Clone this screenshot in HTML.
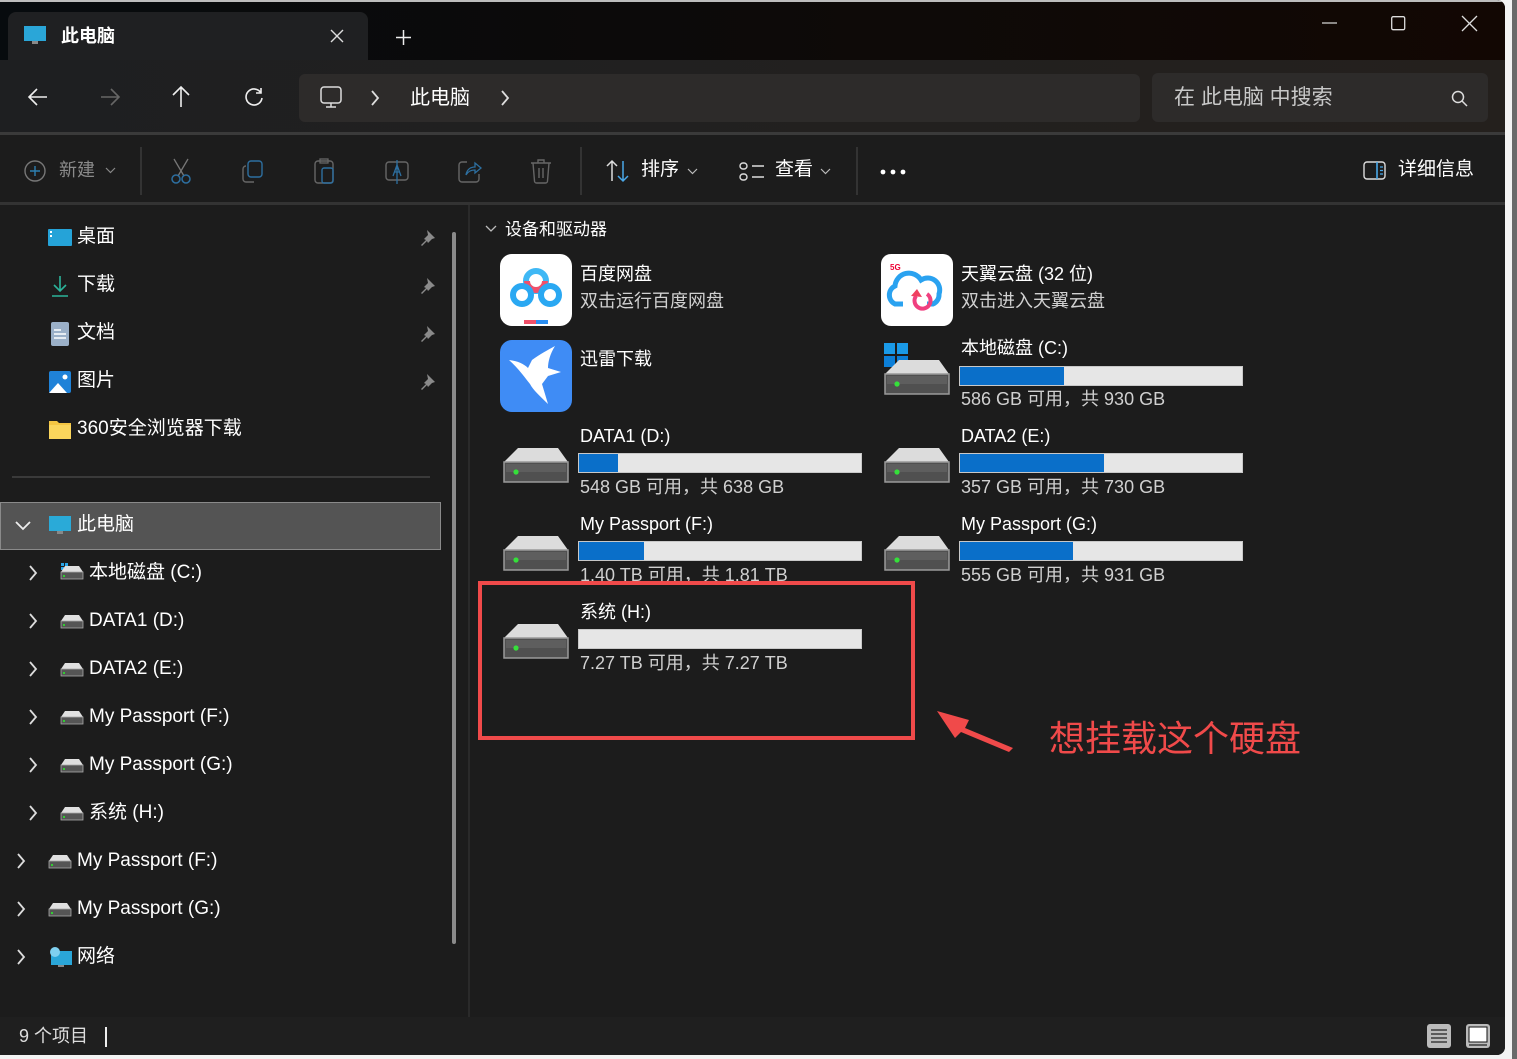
<!DOCTYPE html>
<html><head><meta charset="utf-8"><style>
*{margin:0;padding:0;box-sizing:border-box}
body{width:1517px;height:1059px;background:#f3f3f3;overflow:hidden;position:relative;font-family:"Liberation Sans","Noto Sans CJK SC",sans-serif;color:#fff;line-height:1.3}
.win{position:absolute;left:0;top:0;width:1505px;height:1055px;background:#1c1c1c;border-radius:0 8px 8px 0;overflow:hidden}
.a{position:absolute;white-space:nowrap}
.t19{font-size:19px}
.sub{color:#d0d0d0}
.bar{position:absolute;height:20px;background:#e6e6e6;border:1px solid #c8c8c8}
.bar i{display:block;height:100%;background:#0a6fc9}
svg{position:absolute;overflow:visible}
</style></head><body>
<div style="position:absolute;left:1512px;top:0;width:5px;height:1059px;background:#6a6a6a"></div>
<div class="win">
<svg width="0" height="0" style="position:absolute">
<defs>
<g id="big"><path d="M14 0H54L64 14H0Z" fill="#dcdcdc"/><rect x="0" y="14" width="64" height="20" fill="#505050" stroke="#9a9a9a" stroke-width="1.5"/><rect x="2" y="16" width="60" height="8" fill="#5e5e5e"/><circle cx="12" cy="24" r="2.6" fill="#35e03a"/></g>
<g id="sm"><path d="M4 0H18L22 6H0Z" fill="#e0e0e0"/><rect x="0" y="6" width="22" height="7" fill="#555" stroke="#aaa" stroke-width="0.8"/><rect x="2" y="9" width="2" height="2" fill="#3c3"/></g>
<g id="chev"><path d="M0 0L6 7L0 14" fill="none" stroke="#ddd" stroke-width="1.8"/></g>
<g id="pin"><path d="M6 0L14 8L11 9L7 13L6 11L1 16L0 15L5 10L3 9L7 5Z" fill="#8a8a8a"/></g>
</defs></svg>
<!-- title bar -->
<div class="a" style="left:0;top:0;width:1505px;height:60px;background:linear-gradient(90deg,#070b0e,#0e0a08 60%,#120703)"></div>
<div class="a" style="left:0;top:0;width:1505px;height:2px;background:#bdbdbd"></div>
<div class="a" style="left:8px;top:12px;width:360px;height:48px;background:#1f2022;border-radius:8px 8px 0 0"></div>
<svg style="left:24px;top:26px" width="22" height="20"><rect x="0" y="0" width="22" height="15" fill="#2aa6d8"/><rect x="8" y="15" width="6" height="3" fill="#888"/></svg>
<div class="a" style="left:61px;top:25px;font-size:18px;font-weight:bold">此电脑</div>
<svg style="left:331px;top:30px" width="12" height="12"><path d="M0 0L12 12M12 0L0 12" stroke="#ddd" stroke-width="1.4"/></svg>
<svg style="left:396px;top:30px" width="15" height="15"><path d="M7.5 0V15M0 7.5H15" stroke="#eee" stroke-width="1.5"/></svg>
<svg style="left:1322px;top:22px" width="16" height="2"><path d="M0 1H15" stroke="#ddd" stroke-width="1.2"/></svg>
<svg style="left:1391px;top:16px" width="15" height="15"><rect x="0.7" y="0.7" width="13" height="13" rx="1.5" fill="none" stroke="#ddd" stroke-width="1.3"/></svg>
<svg style="left:1462px;top:16px" width="15" height="15"><path d="M0 0L15 15M15 0L0 15" stroke="#ddd" stroke-width="1.3"/></svg>
<!-- nav -->
<div class="a" style="left:0;top:60px;width:1505px;height:72px;background:linear-gradient(90deg,#1e1f21,#22201f 60%,#24201d)"></div>
<div class="a" style="left:0;top:132px;width:1505px;height:3px;background:#3a3a3a"></div>
<svg style="left:28px;top:88px" width="20" height="18"><path d="M19 9H1M9 1L1 9L9 17" fill="none" stroke="#eee" stroke-width="1.6"/></svg>
<svg style="left:100px;top:88px" width="20" height="18"><path d="M1 9H19M11 1L19 9L11 17" fill="none" stroke="#666" stroke-width="1.6"/></svg>
<svg style="left:172px;top:86px" width="18" height="22"><path d="M9 21V1M1 9L9 1L17 9" fill="none" stroke="#eee" stroke-width="1.6"/></svg>
<svg style="left:244px;top:87px" width="20" height="20"><path d="M17 6A8 8 0 1 0 18 11M17 1V6H12" fill="none" stroke="#eee" stroke-width="1.6"/></svg>
<div class="a" style="left:299px;top:74px;width:841px;height:48px;background:#2d2b2a;border-radius:6px"></div>
<svg style="left:320px;top:86px" width="22" height="22"><rect x="1" y="1" width="20" height="16" rx="3" fill="none" stroke="#ddd" stroke-width="1.5"/><path d="M11 17V21M6 21H16" stroke="#ddd" stroke-width="1.5"/></svg>
<svg style="left:372px;top:91px" width="8" height="14"><use href="#chev"/></svg>
<div class="a" style="left:410px;top:85px;font-size:20px">此电脑</div>
<svg style="left:502px;top:91px" width="8" height="14"><use href="#chev"/></svg>
<div class="a" style="left:1152px;top:73px;width:336px;height:49px;background:#2d2b2a;border-radius:6px"></div>
<div class="a" style="left:1174px;top:84px;font-size:21px;color:#c8c8c8">在 此电脑 中搜索</div>
<svg style="left:1451px;top:90px" width="18" height="18"><circle cx="7" cy="7" r="5.5" fill="none" stroke="#ddd" stroke-width="1.5"/><path d="M11 11L16 16" stroke="#ddd" stroke-width="1.5"/></svg>
<!-- toolbar -->
<div class="a" style="left:0;top:202px;width:1505px;height:3px;background:#333"></div>
<svg style="left:24px;top:160px" width="22" height="22"><circle cx="11" cy="11" r="10" fill="none" stroke="#777" stroke-width="1.4"/><path d="M11 6V16M6 11H16" stroke="#2d7fb0" stroke-width="1.4"/></svg>
<div class="a" style="left:59px;top:159px;font-size:18px;color:#8a8a8a">新建</div>
<svg style="left:106px;top:168px" width="9" height="6"><path d="M0 0L4.5 4.5L9 0" fill="none" stroke="#888" stroke-width="1.2"/></svg>
<div class="a" style="left:140px;top:147px;width:2px;height:48px;background:#333"></div>
<svg style="left:170px;top:159px" width="22" height="26"><path d="M4 0L14 17M18 0L8 17" stroke="#777" stroke-width="1.3"/><circle cx="6" cy="20" r="4" fill="none" stroke="#2d6fa0" stroke-width="1.5"/><circle cx="16" cy="20" r="4" fill="none" stroke="#2d6fa0" stroke-width="1.5"/></svg>
<svg style="left:242px;top:160px" width="22" height="24"><rect x="6" y="1" width="14" height="16" rx="3" fill="none" stroke="#2d6fa0" stroke-width="1.4"/><path d="M4 6A3 3 0 0 0 1 9V19A3 3 0 0 0 4 22H12" fill="none" stroke="#666" stroke-width="1.4"/></svg>
<svg style="left:314px;top:158px" width="22" height="26"><rect x="1" y="3" width="18" height="22" rx="3" fill="none" stroke="#666" stroke-width="1.4"/><rect x="6" y="1" width="8" height="4" fill="none" stroke="#666" stroke-width="1.3"/><rect x="8" y="10" width="11" height="15" rx="2" fill="none" stroke="#2d6fa0" stroke-width="1.4"/></svg>
<svg style="left:385px;top:159px" width="26" height="26"><rect x="1" y="3" width="22" height="18" rx="3" fill="none" stroke="#666" stroke-width="1.4"/><path d="M8 17L12 6L16 17M9.5 13H14.5M12 1V25" fill="none" stroke="#2d6fa0" stroke-width="1.3"/></svg>
<svg style="left:458px;top:159px" width="24" height="24"><path d="M9 3H4A3 3 0 0 0 1 6V20A3 3 0 0 0 4 23H18A3 3 0 0 0 21 20V15" fill="none" stroke="#666" stroke-width="1.4"/><path d="M8 16C9 10 13 8 17 8V4L23 9L17 14V11C13 11 10 12 8 16Z" fill="none" stroke="#2d6fa0" stroke-width="1.3"/></svg>
<svg style="left:530px;top:159px" width="22" height="25"><path d="M1 4H21M8 4V1H14V4M3 4L4.5 22A2 2 0 0 0 6.5 24H15.5A2 2 0 0 0 17.5 22L19 4M9 9V19M13 9V19" fill="none" stroke="#666" stroke-width="1.4"/></svg>
<div class="a" style="left:580px;top:147px;width:2px;height:48px;background:#333"></div>
<svg style="left:606px;top:160px" width="24" height="22"><path d="M6 21V1M1 6L6 1L11 6" fill="none" stroke="#ddd" stroke-width="1.5"/><path d="M17 1V21M12 16L17 21L22 16" fill="none" stroke="#4aa8e8" stroke-width="1.5"/></svg>
<div class="a" style="left:641px;top:158px;font-size:19px">排序</div>
<svg style="left:688px;top:169px" width="9" height="6"><path d="M0 0L4.5 4.5L9 0" fill="none" stroke="#bbb" stroke-width="1.2"/></svg>
<svg style="left:739px;top:162px" width="26" height="20"><rect x="1" y="1" width="7" height="6" rx="3" fill="none" stroke="#ddd" stroke-width="1.4"/><rect x="1" y="12" width="7" height="6" rx="3" fill="none" stroke="#ddd" stroke-width="1.4"/><path d="M13 4H25M13 15H25" stroke="#ddd" stroke-width="1.4"/></svg>
<div class="a" style="left:775px;top:158px;font-size:19px">查看</div>
<svg style="left:821px;top:169px" width="9" height="6"><path d="M0 0L4.5 4.5L9 0" fill="none" stroke="#bbb" stroke-width="1.2"/></svg>
<div class="a" style="left:856px;top:147px;width:2px;height:48px;background:#333"></div>
<svg style="left:880px;top:169px" width="28" height="6"><circle cx="3" cy="3" r="2.4" fill="#fff"/><circle cx="13" cy="3" r="2.4" fill="#fff"/><circle cx="23" cy="3" r="2.4" fill="#fff"/></svg>
<svg style="left:1363px;top:161px" width="24" height="20"><rect x="1" y="1" width="21" height="17" rx="3" fill="none" stroke="#ddd" stroke-width="1.4"/><path d="M14 1V18" stroke="#4aa8e8" stroke-width="1.6"/><path d="M17 6H20M17 9.5H20M17 13H20" stroke="#4aa8e8" stroke-width="1.2"/></svg>
<div class="a" style="left:1398px;top:158px;font-size:19px">详细信息</div>
<!-- sidebar -->
<div class="a" style="left:468px;top:205px;width:2px;height:812px;background:#2a2a2a"></div>
<div class="a" style="left:452px;top:232px;width:4px;height:712px;background:#8a8a8a;border-radius:2px"></div>
<svg style="left:48px;top:229px" width="24" height="18"><rect x="0" y="0" width="24" height="17" rx="1" fill="#25a3d8"/><rect x="2" y="2" width="2" height="2" fill="#fff"/><rect x="2" y="6" width="2" height="2" fill="#fff"/></svg>
<div class="a t19" style="left:77px;top:225px">桌面</div>
<svg style="left:51px;top:275px" width="18" height="22"><path d="M9 1V16M3 10L9 16L15 10M1 21H17" fill="none" stroke="#2bb39a" stroke-width="1.6"/></svg>
<div class="a t19" style="left:77px;top:273px">下载</div>
<svg style="left:51px;top:322px" width="18" height="24"><rect x="0" y="0" width="18" height="24" rx="2" fill="#9bb0c8"/><path d="M3 8H10M3 12H15M3 16H15" stroke="#fff" stroke-width="1.4"/></svg>
<div class="a t19" style="left:77px;top:321px">文档</div>
<svg style="left:49px;top:371px" width="22" height="22"><rect x="0" y="0" width="22" height="22" rx="2" fill="#1f82d8"/><path d="M0 22L9 12L18 22Z" fill="#fff"/><circle cx="16" cy="6" r="2.5" fill="#fff"/></svg>
<div class="a t19" style="left:77px;top:369px">图片</div>
<svg style="left:49px;top:421px" width="22" height="18"><path d="M0 0H8L10 2H22V18H0Z" fill="#f4c542"/><rect x="0" y="4" width="22" height="14" fill="#fad55c"/></svg>
<div class="a t19" style="left:77px;top:417px">360安全浏览器下载</div>
<svg style="left:421px;top:230px" width="16" height="16"><use href="#pin"/></svg>
<svg style="left:421px;top:278px" width="16" height="16"><use href="#pin"/></svg>
<svg style="left:421px;top:326px" width="16" height="16"><use href="#pin"/></svg>
<svg style="left:421px;top:374px" width="16" height="16"><use href="#pin"/></svg>
<div class="a" style="left:12px;top:476px;width:418px;height:2px;background:#3a3a3a"></div>
<div class="a" style="left:0;top:502px;width:441px;height:48px;background:#545454;border:1px solid #8a8a8a"></div>
<svg style="left:15px;top:521px" width="16" height="9"><path d="M1 1L8 8L15 1" fill="none" stroke="#eee" stroke-width="1.8"/></svg>
<svg style="left:49px;top:516px" width="22" height="20"><rect x="0" y="0" width="22" height="15" fill="#2aaad8"/><rect x="8" y="15" width="6" height="3" fill="#888"/></svg>
<div class="a t19" style="left:77px;top:513px">此电脑</div>

<svg style="left:30px;top:566px" width="8" height="14"><use href="#chev"/></svg>
<svg style="left:61px;top:563px" width="22" height="16"><rect x="0" y="0" width="3" height="3" fill="#2aa6e8"/><rect x="4" y="0" width="3" height="3" fill="#2aa6e8"/><rect x="0" y="4" width="3" height="3" fill="#2aa6e8"/><g transform="translate(0,3)"><use href="#sm"/></g></svg>
<div class="a t19" style="left:89px;top:561px">本地磁盘 (C:)</div>
<svg style="left:30px;top:614px" width="8" height="14"><use href="#chev"/></svg>
<svg style="left:61px;top:615px" width="22" height="14"><use href="#sm"/></svg>
<div class="a t19" style="left:89px;top:609px">DATA1 (D:)</div>
<svg style="left:30px;top:662px" width="8" height="14"><use href="#chev"/></svg>
<svg style="left:61px;top:663px" width="22" height="14"><use href="#sm"/></svg>
<div class="a t19" style="left:89px;top:657px">DATA2 (E:)</div>
<svg style="left:30px;top:710px" width="8" height="14"><use href="#chev"/></svg>
<svg style="left:61px;top:711px" width="22" height="14"><use href="#sm"/></svg>
<div class="a t19" style="left:89px;top:705px">My Passport (F:)</div>
<svg style="left:30px;top:758px" width="8" height="14"><use href="#chev"/></svg>
<svg style="left:61px;top:759px" width="22" height="14"><use href="#sm"/></svg>
<div class="a t19" style="left:89px;top:753px">My Passport (G:)</div>
<svg style="left:30px;top:806px" width="8" height="14"><use href="#chev"/></svg>
<svg style="left:61px;top:807px" width="22" height="14"><use href="#sm"/></svg>
<div class="a t19" style="left:89px;top:801px">系统 (H:)</div>
<svg style="left:18px;top:854px" width="8" height="14"><use href="#chev"/></svg>
<svg style="left:49px;top:855px" width="22" height="14"><use href="#sm"/></svg>
<div class="a t19" style="left:77px;top:849px">My Passport (F:)</div>
<svg style="left:18px;top:902px" width="8" height="14"><use href="#chev"/></svg>
<svg style="left:49px;top:903px" width="22" height="14"><use href="#sm"/></svg>
<div class="a t19" style="left:77px;top:897px">My Passport (G:)</div>
<svg style="left:18px;top:950px" width="8" height="14"><use href="#chev"/></svg>
<svg style="left:48px;top:946px" width="24" height="22"><rect x="3" y="5" width="21" height="14" fill="#2aa6d8"/><circle cx="7" cy="6" r="5" fill="#7fd0f0"/><rect x="10" y="19" width="6" height="2" fill="#888"/></svg>
<div class="a t19" style="left:77px;top:945px">网络</div>
<!-- status -->
<div class="a" style="left:0;top:1017px;width:1505px;height:40px;background:#1f1f1f"></div>
<div class="a" style="left:19px;top:1025px;font-size:18px;color:#ddd">9 个项目</div>
<div class="a" style="left:105px;top:1027px;width:2px;height:20px;background:#eee"></div>
<svg style="left:1427px;top:1024px" width="24" height="24"><rect x="0" y="0" width="24" height="24" rx="3" fill="#bbb"/><path d="M4 6H20M4 10H20M4 14H20M4 18H20" stroke="#222" stroke-width="1.2"/></svg>
<svg style="left:1466px;top:1024px" width="24" height="24"><rect x="0" y="0" width="24" height="24" rx="3" fill="#bbb"/><rect x="3" y="3" width="18" height="15" fill="#fff" stroke="#111"/><path d="M3 21H21" stroke="#222" stroke-width="1.2"/></svg>
<!-- content -->
<svg style="left:485px;top:225px" width="12" height="8"><path d="M1 1L6 6L11 1" fill="none" stroke="#bbb" stroke-width="1.3"/></svg>
<div class="a" style="left:505px;top:219px;font-size:17px">设备和驱动器</div>
<!-- baidu -->
<div class="a" style="left:500px;top:254px;width:72px;height:72px;background:#fff;border-radius:12px"></div>
<svg style="left:500px;top:254px" width="72" height="72"><circle cx="36" cy="27" r="10" fill="none" stroke="#3fb8f5" stroke-width="6"/><path d="M27 27A9 9 0 0 0 45 27" fill="none" stroke="#f0506a" stroke-width="6"/><circle cx="22" cy="41" r="9" fill="none" stroke="#2aa8f2" stroke-width="6"/><circle cx="50" cy="41" r="9" fill="none" stroke="#2aa8f2" stroke-width="6"/><rect x="24" y="66" width="12" height="4" fill="#f0506a"/><rect x="36" y="66" width="12" height="4" fill="#2a8ef2"/></svg>
<div class="a" style="left:580px;top:263px;font-size:18px">百度网盘</div>
<div class="a sub" style="left:580px;top:290px;font-size:18px">双击运行百度网盘</div>
<!-- xunlei -->
<div class="a" style="left:500px;top:340px;width:72px;height:72px;background:#3f8cf5;border-radius:12px"></div>
<svg style="left:500px;top:340px" width="72" height="72"><path d="M9 20C18 21 24 24 28 28L32 20C40 14 48 10 55 6C50 14 48 22 48 28L61 32L48 36L42 44L48 64C40 56 33 50 30 44C25 38 20 30 9 20Z" fill="#fff"/></svg>
<div class="a" style="left:580px;top:348px;font-size:18px">迅雷下载</div>
<!-- tianyi -->
<div class="a" style="left:881px;top:254px;width:72px;height:72px;background:#fff;border-radius:10px"></div>
<svg style="left:881px;top:254px" width="72" height="72"><text x="9" y="16" font-size="8" font-weight="bold" fill="#e03" font-family="Liberation Sans">5G</text><path d="M22 50H14A10 10 0 0 1 14 32A14 14 0 0 1 40 26A12 12 0 0 1 58 40A10 10 0 0 1 52 50H46" fill="none" stroke="#2aa2f0" stroke-width="5"/><path d="M35 42A8 8 0 1 0 46 40" fill="none" stroke="#f04080" stroke-width="4"/><path d="M30 42L36 35L41 43Z" fill="#f04060"/></svg>
<div class="a" style="left:961px;top:263px;font-size:18px">天翼云盘 (32 位)</div>
<div class="a sub" style="left:961px;top:290px;font-size:18px">双击进入天翼云盘</div>
<!-- C -->
<svg style="left:884px;top:343px" width="64" height="52"><rect x="0" y="0" width="11" height="11" fill="#1a9ae8"/><rect x="13" y="0" width="11" height="11" fill="#1a9ae8"/><rect x="0" y="13" width="11" height="11" fill="#0c7fd8"/><rect x="13" y="13" width="11" height="11" fill="#0c7fd8"/><g transform="translate(1,17)"><use href="#big"/></g></svg>
<div class="a" style="left:961px;top:337px;font-size:18px">本地磁盘 (C:)</div>
<div class="bar" style="left:959px;top:366px;width:284px"><i style="width:37%"></i></div>
<div class="a sub" style="left:961px;top:388px;font-size:18px">586 GB 可用，共 930 GB</div>
<!-- D -->
<svg style="left:504px;top:448px" width="64" height="36"><use href="#big"/></svg>
<div class="a" style="left:580px;top:425px;font-size:18px">DATA1 (D:)</div>
<div class="bar" style="left:578px;top:453px;width:284px"><i style="width:14%"></i></div>
<div class="a sub" style="left:580px;top:476px;font-size:18px">548 GB 可用，共 638 GB</div>
<!-- E -->
<svg style="left:885px;top:448px" width="64" height="36"><use href="#big"/></svg>
<div class="a" style="left:961px;top:425px;font-size:18px">DATA2 (E:)</div>
<div class="bar" style="left:959px;top:453px;width:284px"><i style="width:51%"></i></div>
<div class="a sub" style="left:961px;top:476px;font-size:18px">357 GB 可用，共 730 GB</div>
<!-- F -->
<svg style="left:504px;top:536px" width="64" height="36"><use href="#big"/></svg>
<div class="a" style="left:580px;top:513px;font-size:18px">My Passport (F:)</div>
<div class="bar" style="left:578px;top:541px;width:284px"><i style="width:23%"></i></div>
<div class="a sub" style="left:580px;top:564px;font-size:18px;height:18px;overflow:hidden">1.40 TB 可用，共 1.81 TB</div>
<!-- G -->
<svg style="left:885px;top:536px" width="64" height="36"><use href="#big"/></svg>
<div class="a" style="left:961px;top:513px;font-size:18px">My Passport (G:)</div>
<div class="bar" style="left:959px;top:541px;width:284px"><i style="width:40%"></i></div>
<div class="a sub" style="left:961px;top:564px;font-size:18px">555 GB 可用，共 931 GB</div>
<!-- H -->
<svg style="left:504px;top:624px" width="64" height="36"><use href="#big"/></svg>
<div class="a" style="left:580px;top:601px;font-size:18px">系统 (H:)</div>
<div class="bar" style="left:578px;top:629px;width:284px"></div>
<div class="a sub" style="left:580px;top:652px;font-size:18px">7.27 TB 可用，共 7.27 TB</div>
<div class="a" style="left:478px;top:581px;width:437px;height:159px;border:4px solid #f04a4a"></div>
<svg style="left:935px;top:708px" width="80" height="42"><path d="M78 40L30 20L34 12L2 3L20 30L26 24L74 44Z" fill="#f04a4a"/></svg>
<div class="a" style="left:1049px;top:716px;font-size:36px;color:#f04a4a">想挂载这个硬盘</div>
</div>
</body></html>
